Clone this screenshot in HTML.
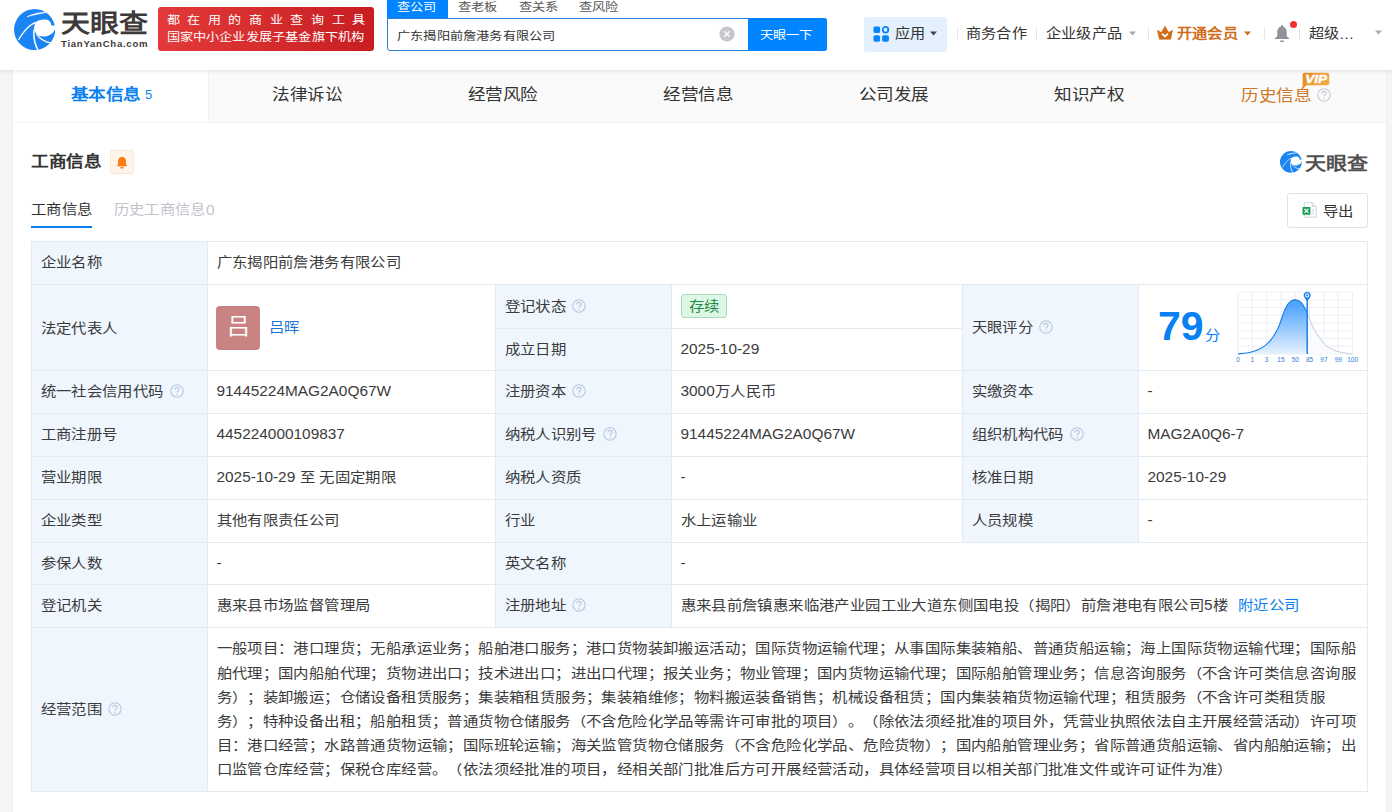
<!DOCTYPE html>
<html lang="zh-CN">
<head>
<meta charset="utf-8">
<style>
*{margin:0;padding:0;box-sizing:border-box;}
html,body{width:1392px;height:812px;overflow:hidden;background:#f5f5f5;font-family:"Liberation Sans",sans-serif;color:#333;text-spacing-trim:space-all;font-feature-settings:"chws" 0,"halt" 0;}
.a{position:absolute;white-space:nowrap;}
.t{position:absolute;white-space:nowrap;font-size:15.4px;line-height:20px;color:#3b3b3b;}
</style>
</head>
<body>

<div class="a" style="left:0;top:0;width:1392px;height:70px;background:#fff;"></div>
<svg class="a" style="left:13.6px;top:8.6px;" width="41.2" height="41.2" viewBox="3.6 3.9 40.8 40.8">
<circle cx="24" cy="24.3" r="20.35" fill="#1a84f2"/>
<path d="M24.6 17.2 C27 15 31 14 35 14.3 C38.5 14.6 40.5 17 40.6 20.3 L46 20.3 L46 23.8 L44.6 23.3 C43.5 26.5 41 29.5 36 30.8 C32 31.6 28.5 31 26.5 29.2 C24.3 27.4 23.5 25 23.5 22 Z" fill="#fff"/>
<path d="M8 34.5 C13 26 18 20.5 24.6 17.2" stroke="#fff" stroke-width="1.3" fill="none"/>
<path d="M23.6 24 C22.6 31 24 38.5 27.5 45" stroke="#fff" stroke-width="1.5" fill="none"/>
<path d="M25.9 28.9 C29 33.5 34 36.5 40.5 37.8" stroke="#fff" stroke-width="1.3" fill="none"/>
<path d="M16.5 11.6 C22 8.6 28.5 7 35.5 7.4 C28.5 8.8 22.5 10 16.5 11.6 Z" fill="#fff" stroke="#fff" stroke-width="0.5"/>
</svg>
<div class="a" style="left:60.5px;top:3px;font-size:29px;line-height:40px;font-weight:bold;color:#3e3a39;letter-spacing:0px;"><span style="display:inline-block;transform:scaleY(0.88);">天眼查</span></div>
<div class="a" style="left:61px;top:36.6px;font-size:9.6px;line-height:13px;font-weight:bold;color:#3e3a39;letter-spacing:0.72px;">TianYanCha.com</div>
<div class="a" style="left:158px;top:7px;width:216px;height:44px;border-radius:3px;background:linear-gradient(90deg,#e23a3a,#c81e22);"></div>
<div class="a" style="left:166.5px;top:10.5px;font-size:13px;line-height:18px;color:#fff;letter-spacing:7.65px;"><span style="display:inline-block;transform:scaleY(0.88);">都在用的商业查询工具</span></div>
<div class="a" style="left:166.5px;top:28px;font-size:13.2px;line-height:18px;color:#fff;"><span style="display:inline-block;transform:scaleY(0.88);letter-spacing:0.2px;">国家中小企业发展子基金旗下机构</span></div>
<div class="a" style="left:387px;top:0;width:61px;height:18px;background:#0084ff;"></div>
<div class="a" style="left:397px;top:-2.5px;font-size:13.2px;line-height:18px;color:#fff;"><span style="display:inline-block;transform:scaleY(0.88);letter-spacing:0.2px;">查公司</span></div>
<div class="a" style="left:458px;top:-2.5px;font-size:13.2px;line-height:18px;color:#555;"><span style="display:inline-block;transform:scaleY(0.88);letter-spacing:0.2px;">查老板</span></div>
<div class="a" style="left:518.5px;top:-2.5px;font-size:13.2px;line-height:18px;color:#555;"><span style="display:inline-block;transform:scaleY(0.88);letter-spacing:0.2px;">查关系</span></div>
<div class="a" style="left:579px;top:-2.5px;font-size:13.2px;line-height:18px;color:#555;"><span style="display:inline-block;transform:scaleY(0.88);letter-spacing:0.2px;">查风险</span></div>
<div class="a" style="left:387px;top:18px;width:440px;height:33px;border:1px solid #2a7fd4;border-radius:0 3px 3px 3px;background:#fff;"></div>
<div class="a" style="left:397px;top:26.5px;font-size:13.2px;line-height:18px;color:#333;"><span style="display:inline-block;transform:scaleY(0.88);letter-spacing:0.2px;">广东揭阳前詹港务有限公司</span></div>
<svg class="a" style="left:719px;top:25.5px;" width="16" height="16" viewBox="0 0 16 16"><circle cx="8" cy="8" r="7.6" fill="#c6c7cc"/><path d="M5.3 5.3L10.7 10.7M10.7 5.3L5.3 10.7" stroke="#fff" stroke-width="1.3"/></svg>
<div class="a" style="left:748px;top:18px;width:79px;height:33px;background:#0084ff;border-radius:0 3px 3px 0;"></div>
<div class="a" style="left:759.5px;top:25.5px;font-size:13.2px;line-height:18px;color:#fff;"><span style="display:inline-block;transform:scaleY(0.88);letter-spacing:0.2px;">天眼一下</span></div>
<div class="a" style="left:864px;top:17px;width:83px;height:35px;background:#e4f0fd;border-radius:3px;"></div>
<svg class="a" style="left:873px;top:26px;" width="17" height="17" viewBox="0 0 17 17">
<rect x="0.5" y="0.4" width="6.6" height="6.7" rx="1.7" fill="#0884fc"/>
<circle cx="12.5" cy="3.75" r="2.8" fill="none" stroke="#0884fc" stroke-width="1.8"/>
<rect x="0.5" y="9.2" width="6.6" height="6.6" rx="1.7" fill="#0884fc"/>
<rect x="9.1" y="9.2" width="6.8" height="6.6" rx="1.7" fill="#0884fc"/>
</svg>
<div class="a" style="left:895px;top:22.8px;font-size:15.2px;line-height:22px;color:#333;"><span style="display:inline-block;transform:scaleY(0.88);letter-spacing:0.2px;">应用</span></div>
<svg class="a" style="left:930px;top:31px;" width="7" height="5" viewBox="0 0 7 5"><path d="M0 0.5H7L3.5 4.5Z" fill="#444"/></svg>
<div class="a" style="left:956.5px;top:27px;width:1px;height:13px;background:#e6e6e6;"></div>
<div class="a" style="left:966px;top:22.8px;font-size:15.2px;line-height:22px;color:#333;"><span style="display:inline-block;transform:scaleY(0.88);letter-spacing:0.2px;">商务合作</span></div>
<div class="a" style="left:1036px;top:27px;width:1px;height:13px;background:#e6e6e6;"></div>
<div class="a" style="left:1046px;top:22.8px;font-size:15.2px;line-height:22px;color:#333;"><span style="display:inline-block;transform:scaleY(0.88);letter-spacing:0.2px;">企业级产品</span></div>
<svg class="a" style="left:1128.5px;top:31px;" width="7" height="5" viewBox="0 0 7 5"><path d="M0 0.5H7L3.5 4.5Z" fill="#aaa"/></svg>
<div class="a" style="left:1147.5px;top:27px;width:1px;height:13px;background:#e6e6e6;"></div>
<svg class="a" style="left:1157px;top:26px;" width="16" height="14" viewBox="0 0 16 14">
<path d="M0.4 4.2 L4.3 6.6 L8 0.3 L11.7 6.6 L15.6 4.2 L13.6 13.2 H2.4 Z" fill="#cf6c1a" stroke="#cf6c1a" stroke-width="0.6" stroke-linejoin="round"/>
<path d="M5.1 7.6 L8 10.6 L10.9 7.6" stroke="#fff" stroke-width="1.7" fill="none"/>
</svg>
<div class="a" style="left:1177px;top:22.8px;font-size:15.2px;line-height:22px;color:#cf6c1a;font-weight:bold;"><span style="display:inline-block;transform:scaleY(0.88);letter-spacing:0.2px;">开通会员</span></div>
<svg class="a" style="left:1244px;top:31px;" width="7" height="5" viewBox="0 0 7 5"><path d="M0 0.5H7L3.5 4.5Z" fill="#cf6c1a"/></svg>
<div class="a" style="left:1263.5px;top:27px;width:1px;height:13px;background:#e6e6e6;"></div>
<svg class="a" style="left:1274px;top:24px;" width="16" height="19" viewBox="0 0 16 19">
<circle cx="8" cy="2.1" r="1.1" fill="#8f9297"/>
<path d="M8 2.6 C4.6 2.6 3.3 5.3 3.3 8.6 V11.6 C3.3 12.8 2.3 13.6 0.9 14.2 V15 H15.1 V14.2 C13.7 13.6 12.7 12.8 12.7 11.6 V8.6 C12.7 5.3 11.4 2.6 8 2.6Z" fill="#8f9297"/>
<rect x="6" y="16.4" width="4" height="1.5" rx="0.6" fill="#8f9297"/>
</svg>
<div class="a" style="left:1290px;top:20.5px;width:7px;height:7px;border-radius:50%;background:#f03030;"></div>
<div class="a" style="left:1299px;top:27px;width:1px;height:13px;background:#e6e6e6;"></div>
<div class="a" style="left:1308.5px;top:22.8px;font-size:15.2px;line-height:22px;color:#333;"><span style="display:inline-block;transform:scaleY(0.88);letter-spacing:0.2px;">超级</span>…</div>
<svg class="a" style="left:1375px;top:30px;" width="7" height="5" viewBox="0 0 7 5"><path d="M0 0.5H7L3.5 4.5Z" fill="#aaa"/></svg>
<div class="a" style="left:12px;top:70px;width:1375px;height:742px;background:#fff;border-left:1px solid #ececec;border-right:1px solid #ececec;"></div>
<div class="a" style="left:13px;top:70px;width:1373px;height:53px;background:#fafafa;border-bottom:1px solid #f3f3f3;"></div>
<div class="a" style="left:13px;top:70px;width:195px;height:52px;background:#fff;"></div>
<div class="a" style="left:208px;top:70px;width:1px;height:52px;background:#f1f1f1;"></div>
<div class="a" style="left:70.5px;top:83px;font-size:17.6px;line-height:24px;color:#0a7ff0;font-weight:bold;"><span style="display:inline-block;transform:scaleY(0.88);letter-spacing:-0.4px;">基本信息</span></div>
<div class="a" style="left:145px;top:85px;font-size:13px;line-height:20px;color:#0a7ff0;">5</div>
<div class="a" style="left:271.3px;top:83px;width:72px;text-align:center;font-size:17.6px;line-height:24px;color:#333;"><span style="display:inline-block;transform:scaleY(0.88);letter-spacing:-0.4px;">法律诉讼</span></div>
<div class="a" style="left:466.8px;top:83px;width:72px;text-align:center;font-size:17.6px;line-height:24px;color:#333;"><span style="display:inline-block;transform:scaleY(0.88);letter-spacing:-0.4px;">经营风险</span></div>
<div class="a" style="left:662.3px;top:83px;width:72px;text-align:center;font-size:17.6px;line-height:24px;color:#333;"><span style="display:inline-block;transform:scaleY(0.88);letter-spacing:-0.4px;">经营信息</span></div>
<div class="a" style="left:857.8px;top:83px;width:72px;text-align:center;font-size:17.6px;line-height:24px;color:#333;"><span style="display:inline-block;transform:scaleY(0.88);letter-spacing:-0.4px;">公司发展</span></div>
<div class="a" style="left:1053.3px;top:83px;width:72px;text-align:center;font-size:17.6px;line-height:24px;color:#333;"><span style="display:inline-block;transform:scaleY(0.88);letter-spacing:-0.4px;">知识产权</span></div>
<div class="a" style="left:1241px;top:83.5px;font-size:17.6px;line-height:24px;color:#d0782a;"><span style="display:inline-block;transform:scaleY(0.88);letter-spacing:-0.4px;">历史信息</span></div>
<svg class="a" style="left:1316.5px;top:87.5px;" width="14" height="14" viewBox="0 0 14 14"><circle cx="7" cy="7" r="6.2" fill="none" stroke="#c3cad3" stroke-width="1.1"/><path d="M4.9 5.5 C4.9 4.1 5.9 3.4 7 3.4 C8.2 3.4 9.1 4.2 9.1 5.3 C9.1 6.7 7.1 6.9 7.1 8.5" fill="none" stroke="#c3cad3" stroke-width="1.1"/><circle cx="7.1" cy="10.4" r="0.75" fill="#c3cad3"/></svg>
<svg class="a" style="left:1300px;top:71.5px;" width="31" height="17" viewBox="0 0 31 17">
<defs><linearGradient id="vg" x1="0" y1="0" x2="1" y2="0.3"><stop offset="0" stop-color="#e88a1e"/><stop offset="1" stop-color="#efaa4a"/></linearGradient></defs>
<path d="M4.6 0.7 H27.3 Q29.3 0.7 29.3 2.7 V11.2 Q29.3 13.2 27.3 13.2 H6.8 L3.4 15.9 Q2.4 16.2 2.6 15 V2.7 Q2.6 0.7 4.6 0.7Z" fill="url(#vg)"/>
<text x="5.3" y="11" font-family="Liberation Sans" font-weight="bold" font-style="italic" font-size="10.8" fill="#fff" stroke="#fff" stroke-width="0.45" textLength="21.5" lengthAdjust="spacingAndGlyphs">VIP</text>
</svg>
<div class="a" style="left:31px;top:150px;font-size:17.6px;line-height:24px;color:#333;font-weight:bold;"><span style="display:inline-block;transform:scaleY(0.88);letter-spacing:-0.4px;">工商信息</span></div>
<div class="a" style="left:110px;top:150px;width:24px;height:24px;background:#fff4ea;border:1px solid #fde6d2;border-radius:2px;"></div>
<svg class="a" style="left:116px;top:155.5px;" width="12" height="13" viewBox="0 0 12 13">
<path d="M6 0.8 C3.2 0.8 2 3 2 5.5 V8.5 L0.6 10.2 H11.4 L10 8.5 V5.5 C10 3 8.8 0.8 6 0.8Z" fill="#ff7a14"/>
<rect x="4.2" y="10.9" width="3.6" height="1.6" rx="0.8" fill="#ff7a14"/>
</svg>
<svg class="a" style="left:1279.8px;top:151.3px;" width="21.8" height="21.8" viewBox="3.6 3.9 40.8 40.8">
<circle cx="24" cy="24.3" r="20.35" fill="#1a84f2"/>
<path d="M24.6 17.2 C27 15 31 14 35 14.3 C38.5 14.6 40.5 17 40.6 20.3 L46 20.3 L46 23.8 L44.6 23.3 C43.5 26.5 41 29.5 36 30.8 C32 31.6 28.5 31 26.5 29.2 C24.3 27.4 23.5 25 23.5 22 Z" fill="#fff"/>
<path d="M8 34.5 C13 26 18 20.5 24.6 17.2" stroke="#fff" stroke-width="1.3" fill="none"/>
<path d="M23.6 24 C22.6 31 24 38.5 27.5 45" stroke="#fff" stroke-width="1.5" fill="none"/>
<path d="M25.9 28.9 C29 33.5 34 36.5 40.5 37.8" stroke="#fff" stroke-width="1.3" fill="none"/>
<path d="M16.5 11.6 C22 8.6 28.5 7 35.5 7.4 C28.5 8.8 22.5 10 16.5 11.6 Z" fill="#fff" stroke="#fff" stroke-width="0.5"/>
</svg>
<div class="a" style="left:1304.5px;top:149.5px;font-size:21px;line-height:28px;font-weight:bold;color:#505050;"><span style="display:inline-block;transform:scaleY(0.88);">天眼查</span></div>
<div class="a" style="left:31px;top:199.5px;font-size:15.4px;line-height:20px;color:#333;"><span style="display:inline-block;transform:scaleY(0.88);letter-spacing:0.4px;">工商信息</span></div>
<div class="a" style="left:31px;top:226px;width:61px;height:2px;background:#0a7ff0;"></div>
<div class="a" style="left:113.5px;top:199.5px;font-size:15.4px;line-height:20px;color:#bfc4cc;"><span style="display:inline-block;transform:scaleY(0.88);letter-spacing:0.4px;">历史工商信息</span>0</div>
<div class="a" style="left:1287px;top:193px;width:81px;height:35px;border:1px solid #dfe3e8;border-radius:3px;background:#fff;"></div>
<svg class="a" style="left:1301.5px;top:202px;" width="15" height="16" viewBox="0 0 15 16">
<path d="M2.3 0.6 H10.3 L14.2 4.5 V15.2 H2.3 Z" fill="#fff" stroke="#d2d5da" stroke-width="1"/>
<path d="M10.3 0.6 V4.5 H14.2" fill="#eceef1" stroke="#d2d5da" stroke-width="1"/>
<rect x="0.5" y="5" width="7.9" height="7.8" rx="0.6" fill="#1f9d55"/>
<path d="M2.5 6.9 L6.4 10.9 M6.4 6.9 L2.5 10.9" stroke="#fff" stroke-width="1.3"/>
<path d="M9.6 7.5H12M9.6 9.5H12M9.6 11.5H12" stroke="#cfd3d8" stroke-width="0.9"/>
</svg>
<div class="a" style="left:1323px;top:201.5px;font-size:15.4px;line-height:20px;color:#333;"><span style="display:inline-block;transform:scaleY(0.88);letter-spacing:0.4px;">导出</span></div>
<div class="a" style="left:31px;top:241px;width:176px;height:550px;background:#eff6fe;"></div>
<div class="a" style="left:495px;top:284px;width:176px;height:343px;background:#eff6fe;"></div>
<div class="a" style="left:962px;top:284px;width:176px;height:258px;background:#eff6fe;"></div>
<div class="a" style="left:31px;top:241px;width:1337px;height:1px;background:#e4eaf1;"></div>
<div class="a" style="left:31px;top:284px;width:1337px;height:1px;background:#e4eaf1;"></div>
<div class="a" style="left:495px;top:328px;width:468px;height:1px;background:#e4eaf1;"></div>
<div class="a" style="left:31px;top:370px;width:1337px;height:1px;background:#e4eaf1;"></div>
<div class="a" style="left:31px;top:413px;width:1337px;height:1px;background:#e4eaf1;"></div>
<div class="a" style="left:31px;top:456px;width:1337px;height:1px;background:#e4eaf1;"></div>
<div class="a" style="left:31px;top:499px;width:1337px;height:1px;background:#e4eaf1;"></div>
<div class="a" style="left:31px;top:542px;width:1337px;height:1px;background:#e4eaf1;"></div>
<div class="a" style="left:31px;top:584px;width:1337px;height:1px;background:#e4eaf1;"></div>
<div class="a" style="left:31px;top:627px;width:1337px;height:1px;background:#e4eaf1;"></div>
<div class="a" style="left:31px;top:791px;width:1337px;height:1px;background:#e4eaf1;"></div>
<div class="a" style="left:31px;top:241px;width:1px;height:551px;background:#e4eaf1;"></div>
<div class="a" style="left:1367px;top:241px;width:1px;height:551px;background:#e4eaf1;"></div>
<div class="a" style="left:207px;top:241px;width:1px;height:551px;background:#e4eaf1;"></div>
<div class="a" style="left:495px;top:284px;width:1px;height:344px;background:#e4eaf1;"></div>
<div class="a" style="left:671px;top:284px;width:1px;height:344px;background:#e4eaf1;"></div>
<div class="a" style="left:962px;top:284px;width:1px;height:259px;background:#e4eaf1;"></div>
<div class="a" style="left:1138px;top:284px;width:1px;height:259px;background:#e4eaf1;"></div>
<div class="t" style="left:40.5px;top:252.3px;color:#3b3b3b;"><span style="display:inline-block;transform:translateY(0.7px) scaleY(0.88);letter-spacing:0.4px;">企业名称</span></div>
<div class="t" style="left:216.5px;top:252.3px;color:#3b3b3b;"><span style="display:inline-block;transform:translateY(0.7px) scaleY(0.88);letter-spacing:0.4px;">广东揭阳前詹港务有限公司</span></div>
<div class="t" style="left:40.5px;top:381.3px;color:#3b3b3b;"><span style="display:inline-block;transform:translateY(0.7px) scaleY(0.88);letter-spacing:0.4px;">统一社会信用代码</span><svg width="14" height="14" viewBox="0 0 14 14" style="vertical-align:middle;margin-left:6px;position:relative;top:-1px"><circle cx="7" cy="7" r="6.2" fill="none" stroke="#b6c8de" stroke-width="1.1"/><path d="M4.9 5.5 C4.9 4.1 5.9 3.4 7 3.4 C8.2 3.4 9.1 4.2 9.1 5.3 C9.1 6.7 7.1 6.9 7.1 8.5" fill="none" stroke="#b6c8de" stroke-width="1.1"/><circle cx="7.1" cy="10.4" r="0.75" fill="#b6c8de"/></svg></div>
<div class="t" style="left:216.5px;top:381.3px;color:#3b3b3b;">91445224MAG2A0Q67W</div>
<div class="t" style="left:504.5px;top:381.3px;color:#3b3b3b;"><span style="display:inline-block;transform:translateY(0.7px) scaleY(0.88);letter-spacing:0.4px;">注册资本</span><svg width="14" height="14" viewBox="0 0 14 14" style="vertical-align:middle;margin-left:6px;position:relative;top:-1px"><circle cx="7" cy="7" r="6.2" fill="none" stroke="#b6c8de" stroke-width="1.1"/><path d="M4.9 5.5 C4.9 4.1 5.9 3.4 7 3.4 C8.2 3.4 9.1 4.2 9.1 5.3 C9.1 6.7 7.1 6.9 7.1 8.5" fill="none" stroke="#b6c8de" stroke-width="1.1"/><circle cx="7.1" cy="10.4" r="0.75" fill="#b6c8de"/></svg></div>
<div class="t" style="left:680.5px;top:381.3px;color:#3b3b3b;">3000<span style="display:inline-block;transform:translateY(0.7px) scaleY(0.88);letter-spacing:0.4px;">万人民币</span></div>
<div class="t" style="left:971.5px;top:381.3px;color:#3b3b3b;"><span style="display:inline-block;transform:translateY(0.7px) scaleY(0.88);letter-spacing:0.4px;">实缴资本</span></div>
<div class="t" style="left:1147.5px;top:381.3px;color:#3b3b3b;">-</div>
<div class="t" style="left:40.5px;top:424.3px;color:#3b3b3b;"><span style="display:inline-block;transform:translateY(0.7px) scaleY(0.88);letter-spacing:0.4px;">工商注册号</span></div>
<div class="t" style="left:216.5px;top:424.3px;color:#3b3b3b;">445224000109837</div>
<div class="t" style="left:504.5px;top:424.3px;color:#3b3b3b;"><span style="display:inline-block;transform:translateY(0.7px) scaleY(0.88);letter-spacing:0.4px;">纳税人识别号</span><svg width="14" height="14" viewBox="0 0 14 14" style="vertical-align:middle;margin-left:6px;position:relative;top:-1px"><circle cx="7" cy="7" r="6.2" fill="none" stroke="#b6c8de" stroke-width="1.1"/><path d="M4.9 5.5 C4.9 4.1 5.9 3.4 7 3.4 C8.2 3.4 9.1 4.2 9.1 5.3 C9.1 6.7 7.1 6.9 7.1 8.5" fill="none" stroke="#b6c8de" stroke-width="1.1"/><circle cx="7.1" cy="10.4" r="0.75" fill="#b6c8de"/></svg></div>
<div class="t" style="left:680.5px;top:424.3px;color:#3b3b3b;">91445224MAG2A0Q67W</div>
<div class="t" style="left:971.5px;top:424.3px;color:#3b3b3b;"><span style="display:inline-block;transform:translateY(0.7px) scaleY(0.88);letter-spacing:0.4px;">组织机构代码</span><svg width="14" height="14" viewBox="0 0 14 14" style="vertical-align:middle;margin-left:6px;position:relative;top:-1px"><circle cx="7" cy="7" r="6.2" fill="none" stroke="#b6c8de" stroke-width="1.1"/><path d="M4.9 5.5 C4.9 4.1 5.9 3.4 7 3.4 C8.2 3.4 9.1 4.2 9.1 5.3 C9.1 6.7 7.1 6.9 7.1 8.5" fill="none" stroke="#b6c8de" stroke-width="1.1"/><circle cx="7.1" cy="10.4" r="0.75" fill="#b6c8de"/></svg></div>
<div class="t" style="left:1147.5px;top:424.3px;color:#3b3b3b;">MAG2A0Q6-7</div>
<div class="t" style="left:40.5px;top:467.3px;color:#3b3b3b;"><span style="display:inline-block;transform:translateY(0.7px) scaleY(0.88);letter-spacing:0.4px;">营业期限</span></div>
<div class="t" style="left:216.5px;top:467.3px;color:#3b3b3b;">2025-10-29 <span style="display:inline-block;transform:translateY(0.7px) scaleY(0.88);letter-spacing:0.4px;">至</span> <span style="display:inline-block;transform:translateY(0.7px) scaleY(0.88);letter-spacing:0.4px;">无固定期限</span></div>
<div class="t" style="left:504.5px;top:467.3px;color:#3b3b3b;"><span style="display:inline-block;transform:translateY(0.7px) scaleY(0.88);letter-spacing:0.4px;">纳税人资质</span></div>
<div class="t" style="left:680.5px;top:467.3px;color:#3b3b3b;">-</div>
<div class="t" style="left:971.5px;top:467.3px;color:#3b3b3b;"><span style="display:inline-block;transform:translateY(0.7px) scaleY(0.88);letter-spacing:0.4px;">核准日期</span></div>
<div class="t" style="left:1147.5px;top:467.3px;color:#3b3b3b;">2025-10-29</div>
<div class="t" style="left:40.5px;top:510.3px;color:#3b3b3b;"><span style="display:inline-block;transform:translateY(0.7px) scaleY(0.88);letter-spacing:0.4px;">企业类型</span></div>
<div class="t" style="left:216.5px;top:510.3px;color:#3b3b3b;"><span style="display:inline-block;transform:translateY(0.7px) scaleY(0.88);letter-spacing:0.4px;">其他有限责任公司</span></div>
<div class="t" style="left:504.5px;top:510.3px;color:#3b3b3b;"><span style="display:inline-block;transform:translateY(0.7px) scaleY(0.88);letter-spacing:0.4px;">行业</span></div>
<div class="t" style="left:680.5px;top:510.3px;color:#3b3b3b;"><span style="display:inline-block;transform:translateY(0.7px) scaleY(0.88);letter-spacing:0.4px;">水上运输业</span></div>
<div class="t" style="left:971.5px;top:510.3px;color:#3b3b3b;"><span style="display:inline-block;transform:translateY(0.7px) scaleY(0.88);letter-spacing:0.4px;">人员规模</span></div>
<div class="t" style="left:1147.5px;top:510.3px;color:#3b3b3b;">-</div>
<div class="t" style="left:40.5px;top:552.8px;color:#3b3b3b;"><span style="display:inline-block;transform:translateY(0.7px) scaleY(0.88);letter-spacing:0.4px;">参保人数</span></div>
<div class="t" style="left:216.5px;top:552.8px;color:#3b3b3b;">-</div>
<div class="t" style="left:504.5px;top:552.8px;color:#3b3b3b;"><span style="display:inline-block;transform:translateY(0.7px) scaleY(0.88);letter-spacing:0.4px;">英文名称</span></div>
<div class="t" style="left:680.5px;top:552.8px;color:#3b3b3b;">-</div>
<div class="t" style="left:40.5px;top:595.3px;color:#3b3b3b;"><span style="display:inline-block;transform:translateY(0.7px) scaleY(0.88);letter-spacing:0.4px;">登记机关</span></div>
<div class="t" style="left:216.5px;top:595.3px;color:#3b3b3b;"><span style="display:inline-block;transform:translateY(0.7px) scaleY(0.88);letter-spacing:0.4px;">惠来县市场监督管理局</span></div>
<div class="t" style="left:504.5px;top:595.3px;color:#3b3b3b;"><span style="display:inline-block;transform:translateY(0.7px) scaleY(0.88);letter-spacing:0.4px;">注册地址</span><svg width="14" height="14" viewBox="0 0 14 14" style="vertical-align:middle;margin-left:6px;position:relative;top:-1px"><circle cx="7" cy="7" r="6.2" fill="none" stroke="#b6c8de" stroke-width="1.1"/><path d="M4.9 5.5 C4.9 4.1 5.9 3.4 7 3.4 C8.2 3.4 9.1 4.2 9.1 5.3 C9.1 6.7 7.1 6.9 7.1 8.5" fill="none" stroke="#b6c8de" stroke-width="1.1"/><circle cx="7.1" cy="10.4" r="0.75" fill="#b6c8de"/></svg></div>
<div class="t" style="left:680.5px;top:595.3px;color:#3b3b3b;"><span style="display:inline-block;transform:translateY(0.7px) scaleY(0.88);letter-spacing:0.4px;">惠来县前詹镇惠来临港产业园工业大道东侧国电投（揭阳）前詹港电有限公司</span>5<span style="display:inline-block;transform:translateY(0.7px) scaleY(0.88);letter-spacing:0.4px;">楼</span><span style="color:#0a7ff0;margin-left:10px;"><span style="display:inline-block;transform:translateY(0.7px) scaleY(0.88);letter-spacing:0.4px;">附近公司</span></span></div>
<div class="t" style="left:40.5px;top:316.8px;color:#3b3b3b;margin-top:1.3px;"><span style="display:inline-block;transform:translateY(0.7px) scaleY(0.88);letter-spacing:0.4px;">法定代表人</span></div>
<div class="t" style="left:504.5px;top:295.8px;color:#3b3b3b;margin-top:0px;"><span style="display:inline-block;transform:translateY(0.7px) scaleY(0.88);letter-spacing:0.4px;">登记状态</span><svg width="14" height="14" viewBox="0 0 14 14" style="vertical-align:middle;margin-left:6px;position:relative;top:-1px"><circle cx="7" cy="7" r="6.2" fill="none" stroke="#b6c8de" stroke-width="1.1"/><path d="M4.9 5.5 C4.9 4.1 5.9 3.4 7 3.4 C8.2 3.4 9.1 4.2 9.1 5.3 C9.1 6.7 7.1 6.9 7.1 8.5" fill="none" stroke="#b6c8de" stroke-width="1.1"/><circle cx="7.1" cy="10.4" r="0.75" fill="#b6c8de"/></svg></div>
<div class="t" style="left:504.5px;top:338.8px;color:#3b3b3b;margin-top:0px;"><span style="display:inline-block;transform:translateY(0.7px) scaleY(0.88);letter-spacing:0.4px;">成立日期</span></div>
<div class="t" style="left:680.5px;top:338.8px;color:#3b3b3b;">2025-10-29</div>
<div class="t" style="left:971.5px;top:316.8px;color:#3b3b3b;"><span style="display:inline-block;transform:translateY(0.7px) scaleY(0.88);letter-spacing:0.4px;">天眼评分</span><svg width="14" height="14" viewBox="0 0 14 14" style="vertical-align:middle;margin-left:6px;position:relative;top:-1px"><circle cx="7" cy="7" r="6.2" fill="none" stroke="#b6c8de" stroke-width="1.1"/><path d="M4.9 5.5 C4.9 4.1 5.9 3.4 7 3.4 C8.2 3.4 9.1 4.2 9.1 5.3 C9.1 6.7 7.1 6.9 7.1 8.5" fill="none" stroke="#b6c8de" stroke-width="1.1"/><circle cx="7.1" cy="10.4" r="0.75" fill="#b6c8de"/></svg></div>
<div class="a" style="left:216px;top:306px;width:44px;height:44px;border-radius:4px;background:#c98383;"></div>
<div class="a"  style="left:216px;top:303.5px;width:44px;height:44px;color:#fff;font-size:23px;line-height:44px;text-align:center;"><span style="display:inline-block;transform:scaleY(0.97);">吕</span></div>
<div class="t" style="left:268.5px;top:316.5px;color:#1a73d9;"><span style="display:inline-block;transform:translateY(0.7px) scaleY(0.88);letter-spacing:0.4px;">吕晖</span></div>
<div class="a" style="left:681px;top:294px;width:46px;height:24px;background:#ddf7e7;border:1px solid #acd9ba;border-radius:3px;"></div>
<div class="t" style="left:688.5px;top:295.5px;color:#1f8b3e;"><span style="display:inline-block;transform:translateY(0.7px) scaleY(0.88);letter-spacing:0.4px;">存续</span></div>
<div class="a" style="left:1158px;top:300px;font-size:41px;line-height:52px;font-weight:bold;color:#0a80f5;">79</div>
<div class="a" style="left:1205px;top:325.5px;font-size:15.4px;line-height:20px;color:#0a80f5;"><span style="display:inline-block;transform:scaleY(0.88);letter-spacing:0.4px;">分</span></div>
<svg class="a" style="left:1233.6px;top:284.4px;overflow:visible;" width="122.6" height="80" viewBox="-4 -8 122.6 80">
<defs><linearGradient id="cg" x1="0" y1="0" x2="0" y2="1"><stop offset="0.1" stop-color="#52a5ff"/><stop offset="1" stop-color="#e6f1fd"/></linearGradient></defs>
<line x1="0.00" y1="0" x2="0.00" y2="62" stroke="#ebf0f7" stroke-width="1"/><line x1="0" y1="0.00" x2="114.6" y2="0.00" stroke="#ebf0f7" stroke-width="1"/><line x1="14.32" y1="0" x2="14.32" y2="62" stroke="#ebf0f7" stroke-width="1"/><line x1="0" y1="7.75" x2="114.6" y2="7.75" stroke="#ebf0f7" stroke-width="1"/><line x1="28.65" y1="0" x2="28.65" y2="62" stroke="#ebf0f7" stroke-width="1"/><line x1="0" y1="15.50" x2="114.6" y2="15.50" stroke="#ebf0f7" stroke-width="1"/><line x1="42.97" y1="0" x2="42.97" y2="62" stroke="#ebf0f7" stroke-width="1"/><line x1="0" y1="23.25" x2="114.6" y2="23.25" stroke="#ebf0f7" stroke-width="1"/><line x1="57.30" y1="0" x2="57.30" y2="62" stroke="#ebf0f7" stroke-width="1"/><line x1="0" y1="31.00" x2="114.6" y2="31.00" stroke="#ebf0f7" stroke-width="1"/><line x1="71.62" y1="0" x2="71.62" y2="62" stroke="#ebf0f7" stroke-width="1"/><line x1="0" y1="38.75" x2="114.6" y2="38.75" stroke="#ebf0f7" stroke-width="1"/><line x1="85.95" y1="0" x2="85.95" y2="62" stroke="#ebf0f7" stroke-width="1"/><line x1="0" y1="46.50" x2="114.6" y2="46.50" stroke="#ebf0f7" stroke-width="1"/><line x1="100.27" y1="0" x2="100.27" y2="62" stroke="#ebf0f7" stroke-width="1"/><line x1="0" y1="54.25" x2="114.6" y2="54.25" stroke="#ebf0f7" stroke-width="1"/><line x1="114.60" y1="0" x2="114.60" y2="62" stroke="#ebf0f7" stroke-width="1"/><line x1="0" y1="62.00" x2="114.6" y2="62.00" stroke="#ebf0f7" stroke-width="1"/>
<path d="M69.10,20.60 C70.23,23.33 73.78,32.77 75.90,37.00 C78.02,41.23 79.72,43.17 81.80,46.00 C83.88,48.83 85.37,51.73 88.40,54.00 C91.43,56.27 95.67,58.27 100.00,59.60 C104.33,60.93 112.00,61.60 114.40,62.00 L114.6,62 L69.1,62 Z" fill="#fafbfc"/>
<path d="M0.00,62.00 C2.07,61.70 9.10,60.92 12.40,60.20 C15.70,59.48 17.33,58.80 19.80,57.70 C22.27,56.60 24.98,55.27 27.20,53.60 C29.42,51.93 31.38,49.80 33.10,47.70 C34.82,45.60 36.15,43.35 37.50,41.00 C38.85,38.65 40.08,36.30 41.20,33.60 C42.32,30.90 43.08,27.82 44.20,24.80 C45.32,21.78 46.55,18.03 47.90,15.50 C49.25,12.97 50.70,10.87 52.30,9.60 C53.90,8.33 55.65,7.72 57.50,7.90 C59.35,8.08 61.68,9.00 63.40,10.70 C65.12,12.40 66.85,16.45 67.80,18.10 C68.75,19.75 68.88,20.18 69.10,20.60 L69.1,62 Z" fill="url(#cg)"/>
<path d="M0.00,62.00 C2.07,61.70 9.10,60.92 12.40,60.20 C15.70,59.48 17.33,58.80 19.80,57.70 C22.27,56.60 24.98,55.27 27.20,53.60 C29.42,51.93 31.38,49.80 33.10,47.70 C34.82,45.60 36.15,43.35 37.50,41.00 C38.85,38.65 40.08,36.30 41.20,33.60 C42.32,30.90 43.08,27.82 44.20,24.80 C45.32,21.78 46.55,18.03 47.90,15.50 C49.25,12.97 50.70,10.87 52.30,9.60 C53.90,8.33 55.65,7.72 57.50,7.90 C59.35,8.08 61.68,9.00 63.40,10.70 C65.12,12.40 66.85,16.45 67.80,18.10 C68.75,19.75 68.88,20.18 69.10,20.60" fill="none" stroke="#1b7fe8" stroke-width="1.15"/>
<path d="M69.10,20.60 C70.23,23.33 73.78,32.77 75.90,37.00 C78.02,41.23 79.72,43.17 81.80,46.00 C83.88,48.83 85.37,51.73 88.40,54.00 C91.43,56.27 95.67,58.27 100.00,59.60 C104.33,60.93 112.00,61.60 114.40,62.00" fill="none" stroke="#c5cbd3" stroke-width="1"/>
<line x1="69.19999999999999" y1="8" x2="69.19999999999999" y2="62" stroke="#1b7fe8" stroke-width="1.5"/>
<path d="M69.19999999999999 9.6 L66.39999999999999 5.4 A3.45 3.45 0 1 1 72.0 5.4 Z" fill="#1b7fe8"/>
<circle cx="69.19999999999999" cy="3.4" r="2.1" fill="#fff"/>
<circle cx="69.19999999999999" cy="3.4" r="1.1" fill="#1b7fe8"/>
<text x="0.00" y="70.5" font-size="6.5" font-family="Liberation Sans" fill="#2f80dc" text-anchor="middle">0</text><text x="14.32" y="70.5" font-size="6.5" font-family="Liberation Sans" fill="#2f80dc" text-anchor="middle">1</text><text x="28.65" y="70.5" font-size="6.5" font-family="Liberation Sans" fill="#2f80dc" text-anchor="middle">3</text><text x="42.97" y="70.5" font-size="6.5" font-family="Liberation Sans" fill="#2f80dc" text-anchor="middle">15</text><text x="57.30" y="70.5" font-size="6.5" font-family="Liberation Sans" fill="#2f80dc" text-anchor="middle">50</text><text x="71.62" y="70.5" font-size="6.5" font-family="Liberation Sans" fill="#2f80dc" text-anchor="middle">85</text><text x="85.95" y="70.5" font-size="6.5" font-family="Liberation Sans" fill="#2f80dc" text-anchor="middle">97</text><text x="100.27" y="70.5" font-size="6.5" font-family="Liberation Sans" fill="#2f80dc" text-anchor="middle">99</text><text x="114.60" y="70.5" font-size="6.5" font-family="Liberation Sans" fill="#2f80dc" text-anchor="middle">100</text>
</svg>
<div class="t" style="left:40.5px;top:698.8px;color:#3b3b3b;"><span style="display:inline-block;transform:translateY(0.7px) scaleY(0.88);letter-spacing:0.4px;">经营范围</span><svg width="14" height="14" viewBox="0 0 14 14" style="vertical-align:middle;margin-left:6px;position:relative;top:-1px"><circle cx="7" cy="7" r="6.2" fill="none" stroke="#b6c8de" stroke-width="1.1"/><path d="M4.9 5.5 C4.9 4.1 5.9 3.4 7 3.4 C8.2 3.4 9.1 4.2 9.1 5.3 C9.1 6.7 7.1 6.9 7.1 8.5" fill="none" stroke="#b6c8de" stroke-width="1.1"/><circle cx="7.1" cy="10.4" r="0.75" fill="#b6c8de"/></svg></div>
<div class="t" style="left:216.5px;top:638.3px;"><span style="display:inline-block;transform:translateY(0.7px) scaleY(0.88);letter-spacing:0.4px;">一般项目：港口理货；无船承运业务；船舶港口服务；港口货物装卸搬运活动；国际货物运输代理；从事国际集装箱船、普通货船运输；海上国际货物运输代理；国际船</span></div>
<div class="t" style="left:216.5px;top:662.5px;"><span style="display:inline-block;transform:translateY(0.7px) scaleY(0.88);letter-spacing:0.4px;">舶代理；国内船舶代理；货物进出口；技术进出口；进出口代理；报关业务；物业管理；国内货物运输代理；国际船舶管理业务；信息咨询服务（不含许可类信息咨询服</span></div>
<div class="t" style="left:216.5px;top:686.6999999999999px;"><span style="display:inline-block;transform:translateY(0.7px) scaleY(0.88);letter-spacing:0.4px;">务）；装卸搬运；仓储设备租赁服务；集装箱租赁服务；集装箱维修；物料搬运装备销售；机械设备租赁；国内集装箱货物运输代理；租赁服务（不含许可类租赁服</span></div>
<div class="t" style="left:216.5px;top:710.9px;"><span style="display:inline-block;transform:translateY(0.7px) scaleY(0.88);letter-spacing:0.4px;">务）；特种设备出租；船舶租赁；普通货物仓储服务（不含危险化学品等需许可审批的项目）。（除依法须经批准的项目外，凭营业执照依法自主开展经营活动）许可项</span></div>
<div class="t" style="left:216.5px;top:735.0999999999999px;"><span style="display:inline-block;transform:translateY(0.7px) scaleY(0.88);letter-spacing:0.4px;">目：港口经营；水路普通货物运输；国际班轮运输；海关监管货物仓储服务（不含危险化学品、危险货物）；国内船舶管理业务；省际普通货船运输、省内船舶运输；出</span></div>
<div class="t" style="left:216.5px;top:759.3px;"><span style="display:inline-block;transform:translateY(0.7px) scaleY(0.88);letter-spacing:0.4px;">口监管仓库经营；保税仓库经营。（依法须经批准的项目，经相关部门批准后方可开展经营活动，具体经营项目以相关部门批准文件或许可证件为准）</span></div>
<div class="a" style="left:0;top:70px;width:1392px;height:5px;background:linear-gradient(to bottom,rgba(0,0,0,0.07),rgba(0,0,0,0.03) 40%,rgba(0,0,0,0));"></div>
</body>
</html>
